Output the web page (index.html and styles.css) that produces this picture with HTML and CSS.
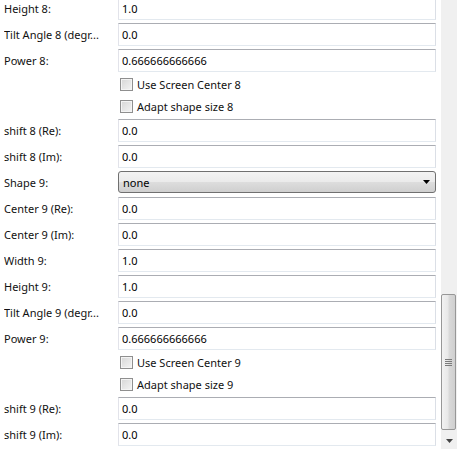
FILE: index.html
```html
<!DOCTYPE html>
<html lang="en">
<head>
  <meta charset="UTF-8">
  <title>Shape settings</title>
  <link rel="stylesheet" href="styles.css">
</head>
<body>
  <div class="window">
    <div class="panel">
      <div class="form">
        <div class="row"><span class="name">Height 8:</span><div class="field">1.0</div></div>
        <div class="row"><span class="name">Tilt Angle 8 (degr...</span><div class="field">0.0</div></div>
        <div class="row"><span class="name">Power 8:</span><div class="field">0.666666666666</div></div>
        <div class="row check"><span class="box"></span><span>Use Screen Center 8</span></div>
        <div class="row check"><span class="box"></span><span>Adapt shape size 8</span></div>
        <div class="row"><span class="name">shift 8 (Re):</span><div class="field">0.0</div></div>
        <div class="row"><span class="name">shift 8 (Im):</span><div class="field">0.0</div></div>
        <div class="row"><span class="name">Shape 9:</span>
          <div class="combo">
            <span>none</span>
            <svg class="caret" width="7" height="4" viewBox="0 0 7 4"><polygon points="0,0 7,0 3.5,4" fill="#000"/></svg>
          </div>
        </div>
        <div class="row"><span class="name">Center 9 (Re):</span><div class="field">0.0</div></div>
        <div class="row"><span class="name">Center 9 (Im):</span><div class="field">0.0</div></div>
        <div class="row"><span class="name">Width 9:</span><div class="field">1.0</div></div>
        <div class="row"><span class="name">Height 9:</span><div class="field">1.0</div></div>
        <div class="row"><span class="name">Tilt Angle 9 (degr...</span><div class="field">0.0</div></div>
        <div class="row"><span class="name">Power 9:</span><div class="field">0.666666666666</div></div>
        <div class="row check"><span class="box"></span><span>Use Screen Center 9</span></div>
        <div class="row check"><span class="box"></span><span>Adapt shape size 9</span></div>
        <div class="row"><span class="name">shift 9 (Re):</span><div class="field">0.0</div></div>
        <div class="row"><span class="name">shift 9 (Im):</span><div class="field">0.0</div></div>
      </div>
    </div>

    <!-- vertical scrollbar, scrolled to the bottom -->
    <div class="scrollbar">
      <div class="track">
        <div class="thumb"><span class="grip"></span></div>
      </div>
      <div class="arrow-down">
        <svg width="7" height="4" viewBox="0 0 7 4"><polygon points="0,0 7,0 3.5,4" fill="#444"/></svg>
      </div>
    </div>
  </div>
</body>
</html>
```

FILE: styles.css
```css
body {
  margin: 0;
  background: #fff;
  font-family: "Noto Sans", "Open Sans", sans-serif;
  font-size: 11px;
  color: #111;
  overflow: hidden;
}
.window {
  display: flex;
  width: 457px;
  height: 449px;
}
.panel {
  flex: 1;
  overflow: hidden;
}
.form {
  margin-top: -3px;
  padding: 0 5px 0 4px;
}
.row {
  display: flex;
  align-items: center;
  height: 23px;
  margin-bottom: 3px;
}
.name {
  width: 114px;
  flex: none;
  white-space: nowrap;
  overflow: hidden;
}
.field {
  flex: 1;
  height: 23px;
  box-sizing: border-box;
  border: 1px solid;
  border-color: #abadb3 #dbdfe6 #e3e9ef #e2e3ea;
  padding-left: 3px;
  display: flex;
  align-items: center;
  color: #000;
}
.row.check {
  height: 22px;
  margin-bottom: 0;
  box-sizing: border-box;
  padding-left: 116px;
  padding-top: 3px;
  align-items: flex-start;
}
.row.check span:last-child {
  line-height: 13px;
  margin-left: 4px;
}
.box {
  width: 13px;
  height: 13px;
  box-sizing: border-box;
  border: 1px solid #8f8f8f;
  background: linear-gradient(135deg, #d6d6d6, #f4f4f4);
  box-shadow: inset 0 0 0 1px #f4f4f4;
}
.combo {
  flex: 1;
  height: 22px;
  box-sizing: border-box;
  border: 1px solid #707070;
  border-radius: 3px;
  background: linear-gradient(#f3f3f3 0%, #ebebeb 48%, #dddddd 52%, #cfcfcf 100%);
  padding: 0 5px 0 4px;
  display: flex;
  align-items: center;
  justify-content: space-between;
  color: #000;
  margin-top: -1px;
}
.scrollbar {
  width: 16px;
  flex: none;
  display: flex;
  flex-direction: column;
  background: #f0f0f0;
}
.track {
  flex: 1;
  display: flex;
  flex-direction: column;
  justify-content: flex-end;
  padding-bottom: 2px;
}
.thumb {
  height: 136px;
  margin: 0 1px 0 0;
  box-sizing: border-box;
  border: 1px solid #979797;
  border-radius: 2px;
  background: linear-gradient(90deg, #f2f2f2, #e8e8e8 45%, #d9d9d9 55%, #cfcfcf);
  display: flex;
  align-items: center;
  justify-content: center;
}
.grip {
  width: 7px;
  height: 7px;
  background: repeating-linear-gradient(#7a7a7a 0 1px, transparent 1px 2px);
}
.arrow-down {
  height: 17px;
  display: flex;
  align-items: center;
  justify-content: center;
}
```
